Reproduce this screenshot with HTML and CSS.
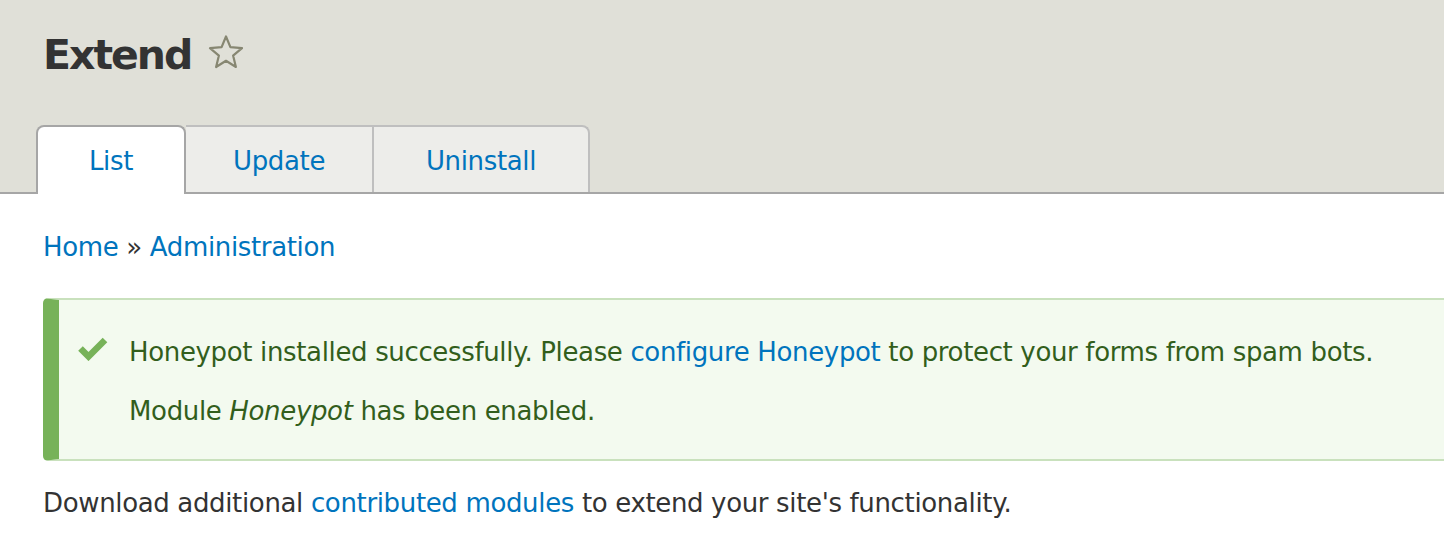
FILE: index.html
```html
<!DOCTYPE html>
<html lang="en">
<head>
<meta charset="utf-8">
<title>Extend</title>
<link rel="stylesheet" href="styles.css">
</head>
<body>
<header class="page-header">
  <h1 class="page-title">Extend <span class="shortcut" aria-label="Add to shortcuts"><svg width="38" height="38" viewBox="0 0 38 38"><polygon points="19,2.5 23.4,13.2 35,14.1 26.1,21.6 28.9,33 19,26.8 9.1,33 11.9,21.6 3,14.1 14.6,13.2" fill="none" stroke="#878772" stroke-width="2.2" stroke-linejoin="round"/></svg></span></h1>
  <nav class="tabs">
    <a class="tab is-active" href="#">List</a>
    <a class="tab tab-mid" href="#">Update</a>
    <a class="tab tab-last" href="#">Uninstall</a>
  </nav>
</header>
<main class="content">
  <div class="breadcrumb"><a href="#">Home</a> » <a href="#">Administration</a></div>
  <div class="messages">
    <svg class="check" width="32" height="24" viewBox="0 0 32 24"><path d="M3.5 11.5 L11.5 19.5 L28 3" fill="none" stroke="#77b259" stroke-width="6.5"/></svg>
    <p class="msg">Honeypot installed successfully. Please <a href="#">configure Honeypot</a> to protect your forms from spam bots.</p>
    <p class="msg">Module <em>Honeypot</em> has been enabled.</p>
  </div>
  <p class="intro">Download additional <a href="#">contributed modules</a> to extend your site's functionality.</p>
</main>
</body>
</html>
```
FILE: styles.css
```css
html, body {
  margin: 0;
  padding: 0;
}
body {
  font-family: "DejaVu Sans", "Lucida Grande", sans-serif;
  font-size: 26px;
  line-height: 39px;
  letter-spacing: -0.35px;
  color: #333;
  background: #fff;
  overflow-x: hidden;
}
a {
  color: #0074bd;
  text-decoration: none;
}
.page-header {
  background: #e0e0d8;
  border-bottom: 2px solid #a6a6a6;
  padding: 29px 0 0 43px;
}
.page-title {
  margin: 0;
  font-size: 41px;
  line-height: 52px;
  font-weight: bold;
  letter-spacing: -2px;
  color: #333;
  display: flex;
  align-items: center;
}
.shortcut {
  display: inline-flex;
  margin-left: 16px;
  margin-top: -4px;
}
.tabs {
  display: flex;
  align-items: flex-start;
  margin: 44px 0 -2px -7px;
}
.tab {
  display: block;
  padding: 15px 0 11px;
  text-align: center;
  background: #ededea;
  border-top: 2px solid #bfbfbf;
  border-right: 2px solid #bfbfbf;
}
.tab.is-active {
  width: 146px;
  background: #fff;
  border: 2px solid #a6a6a6;
  border-bottom: none;
  border-radius: 8px 8px 0 0;
  padding-bottom: 13px;
}
.tab-mid {
  width: 186px;
}
.tab-last {
  width: 214px;
  border-top-right-radius: 8px;
}
.content {
  padding: 0 0 0 43px;
}
.breadcrumb {
  margin-top: 34px;
  color: #333;
}
.messages {
  position: relative;
  margin: 31px -120px 0 0;
  background: #f3faef;
  border: 2px solid #c9e1bd;
  border-left: 16px solid #77b259;
  border-radius: 5px;
  padding: 33px 40px 28px 70px;
  color: #325e1c;
}
.check {
  position: absolute;
  left: 18px;
  top: 37px;
}
.msg {
  margin: 0;
}
.msg + .msg {
  margin-top: 20px;
}
.intro {
  margin: 23px 0 0;
}
```
